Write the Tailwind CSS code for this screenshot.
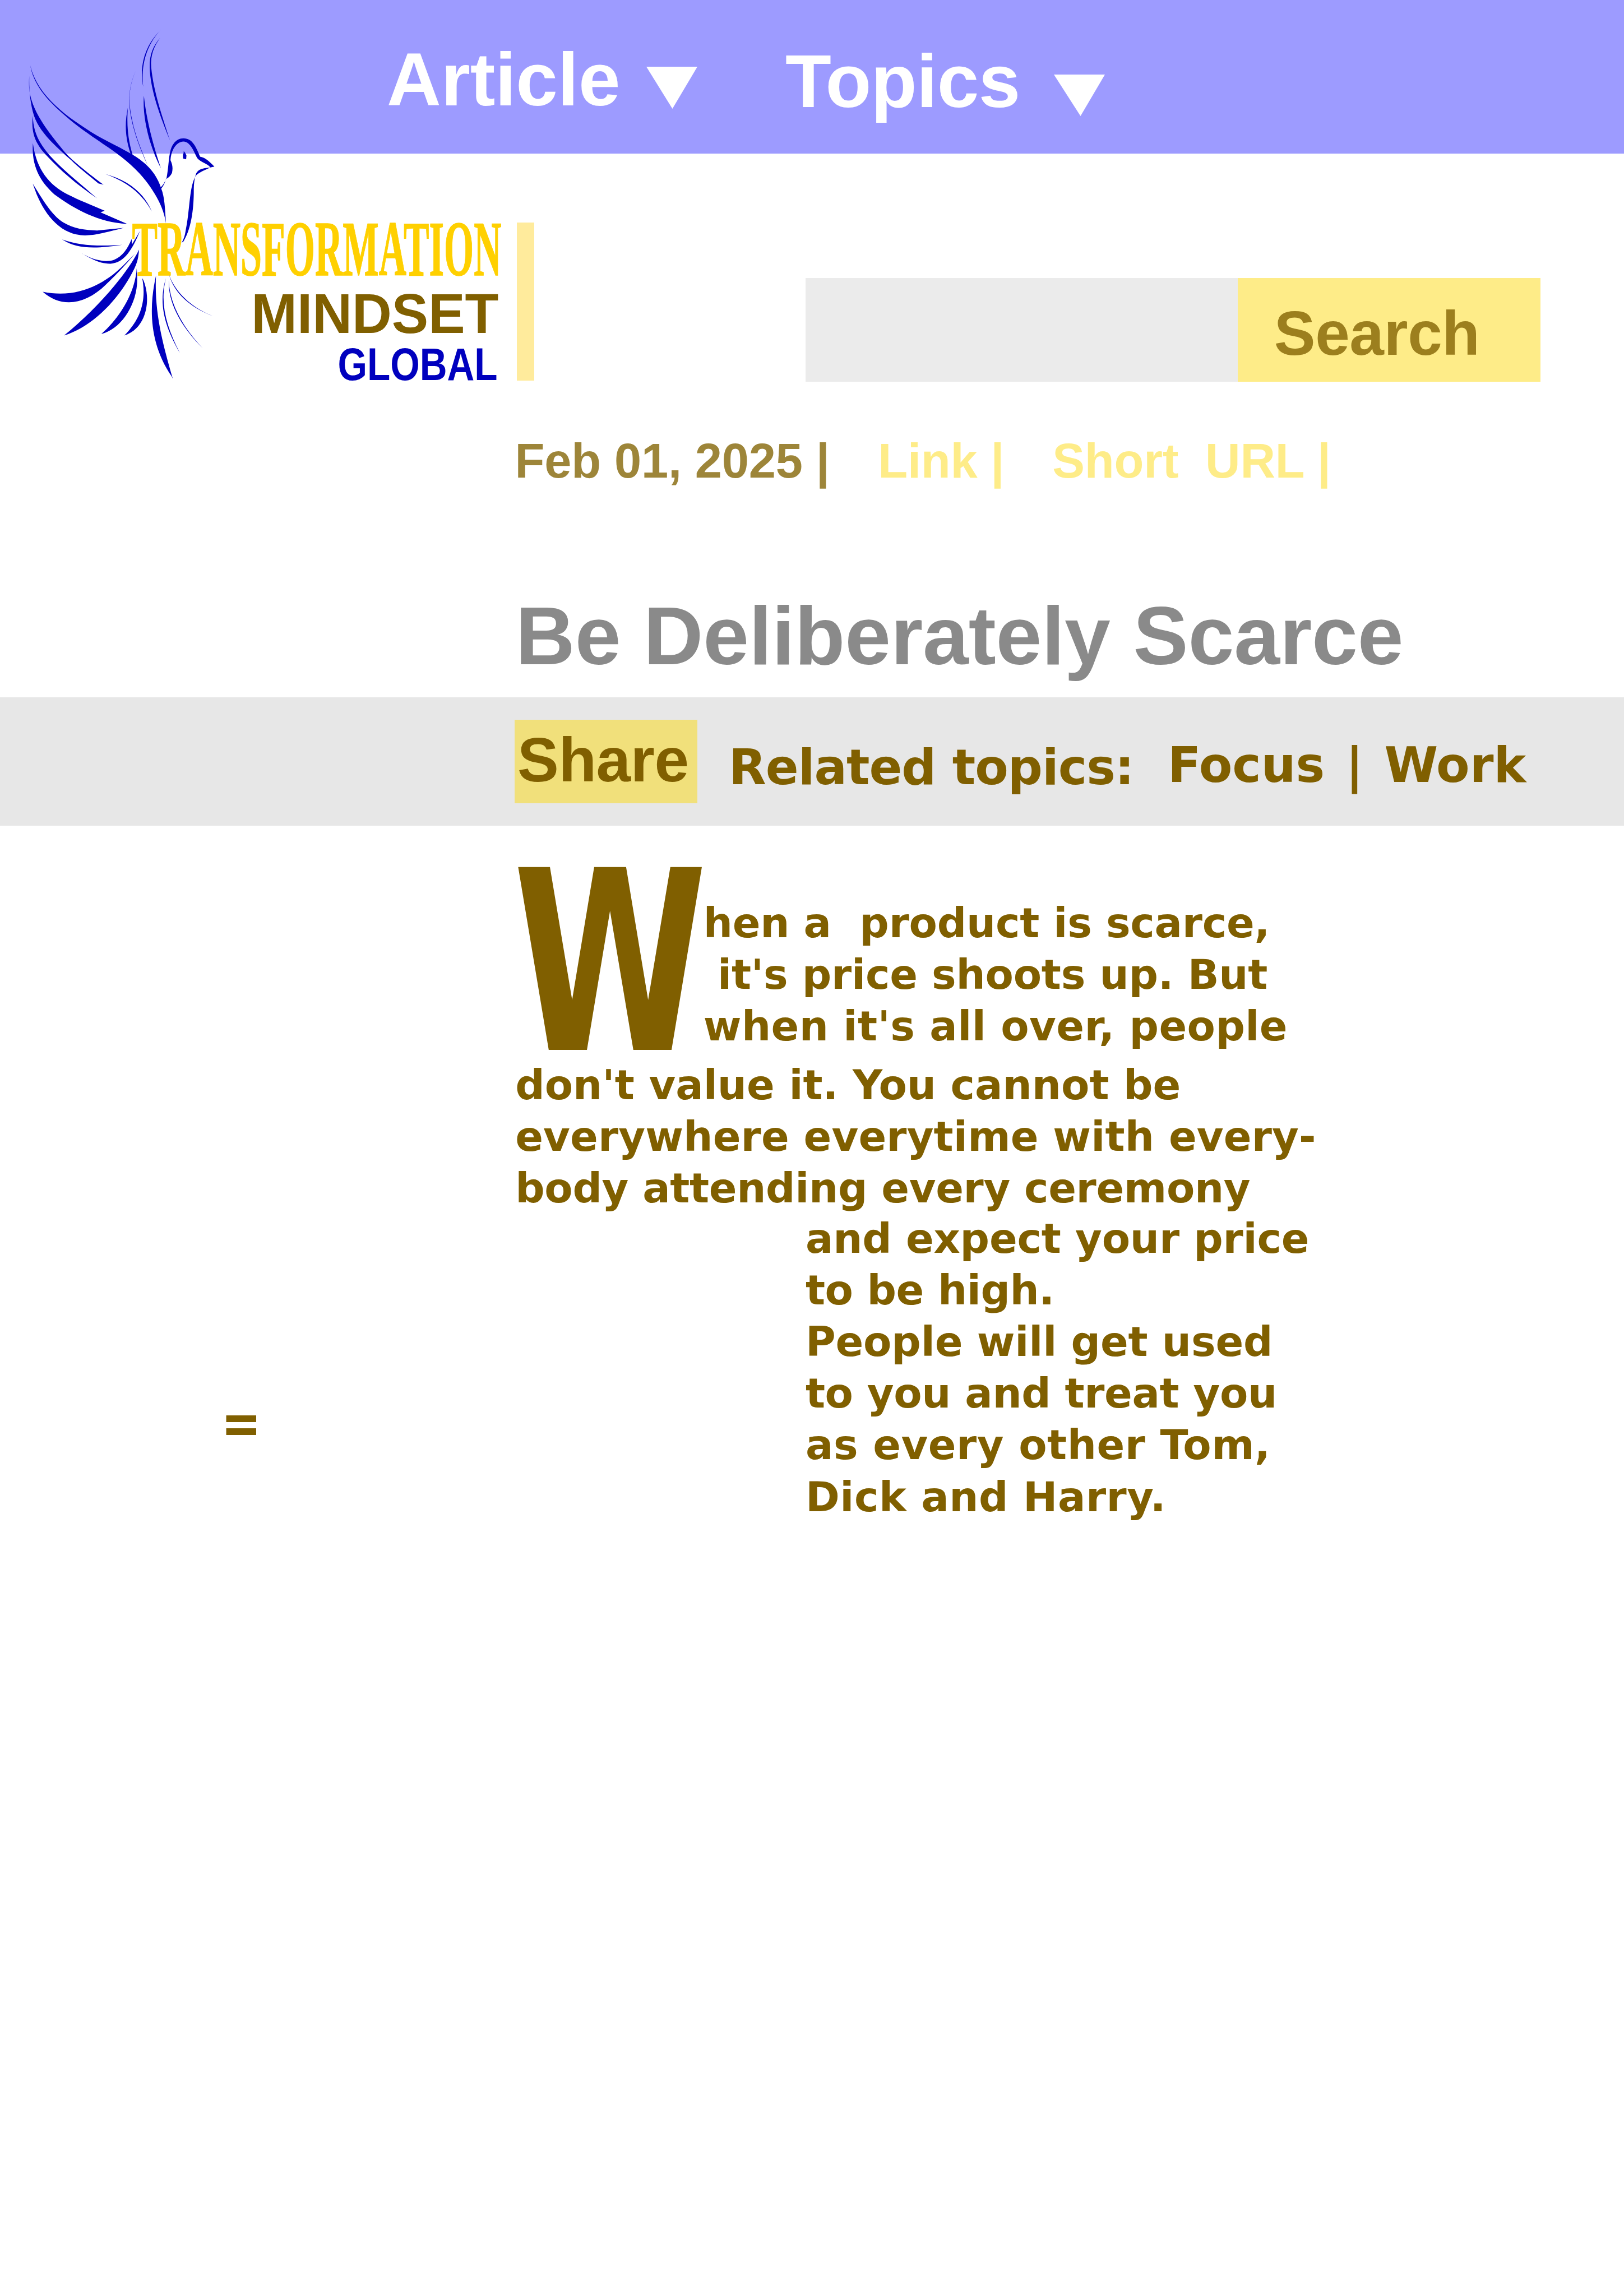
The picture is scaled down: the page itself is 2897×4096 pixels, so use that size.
<!DOCTYPE html>
<html lang="en">
<head>
<meta charset="utf-8">
<title>Be Deliberately Scarce</title>
<script src="https://cdn.jsdelivr.net/npm/@tailwindcss/browser@4"></script>
</head>
<body class="relative h-[4096px] w-[2897px] overflow-hidden bg-white font-['Liberation_Sans',Arial,sans-serif] font-bold text-[#805f00]">

<header class="flex h-[273.6px] items-start bg-[#9d9bff] pl-[690px] text-[134px] leading-[160px] text-white">
  <a class="mt-[62px] w-[418px] tracking-[-0.1px]">Article</a>
  <svg class="mt-[119.4px] ml-[45px] h-[75px] w-[91px]" viewBox="0 0 91 75" fill="currentColor"><path d="M0 0H91L46.5 75Z"/></svg>
  <a class="mt-[65.4px] ml-[157px] w-[421px] tracking-[-0.5px]">Topics</a>
  <svg class="mt-[133px] ml-[58px] h-[74px] w-[91px]" viewBox="0 0 91 74" fill="currentColor"><path d="M0 0H91L47.5 74Z"/></svg>
</header>

<!-- Dove and wordmark, overlapping the top bar -->
<svg class="absolute top-0 left-0 h-[702px] w-[966px]" viewBox="0 0 1060 770">
  <g fill="#0000be" transform="translate(40 40) scale(.33333)">
    <path d="M826 53C735 140 695 260 721 390C706 262 741 140 826 53Z"/>
    <path d="M821 102C780 148 757 200 759 275C763 410 820 560 879 706C835 570 782 420 768 275C762 205 785 150 821 102Z"/>
    <path d="M725 442C715 570 758 740 825 868C785 750 740 590 725 442Z"/>
    <path d="M678 294C630 400 635 490 655 580C675 680 710 760 748 852C705 760 670 670 650 570C632 480 633 390 678 294Z"/>
    <path d="M631 512C610 610 615 700 655 805L664 805C625 690 625 590 631 512Z"/>
    <path d="M58 264C100 450 290 575 420 658C510 712 580 742 630 772C740 830 800 900 826 985C848 1040 848 1100 855 1192C845 1125 820 1070 790 1020C720 900 620 815 500 735C410 672 330 620 270 565C150 465 75 370 58 264Z"/>
    <path d="M52 325C48 375 52 420 58 440C80 540 150 640 262 775C290 808 380 885 488 964L458 957C400 908 340 862 300 822C200 735 110 650 80 560C55 480 50 400 52 325Z"/>
    <path d="M73 560C75 745 220 845 450 1044C330 965 230 875 160 800C90 730 60 660 73 560Z"/>
    <path d="M73 720C95 880 170 965 275 1020C350 1058 410 1080 495 1117L470 1126L627 1195C460 1185 320 1110 198 1020C110 940 65 850 73 720Z"/>
    <path d="M72 958C130 1050 180 1140 250 1185C310 1222 380 1232 450 1233L607 1218C500 1245 440 1262 380 1262C240 1260 150 1150 95 1020Z"/>
    <path d="M497 901C620 935 720 1000 772 1122C710 1010 620 945 497 901Z"/>
    <path d="M822 982C845 960 850 940 857 930C870 870 870 800 882 760C895 715 925 692 957 692C1010 692 1030 740 1055 800C1090 808 1105 825 1139 858L1115 863C1100 840 1060 835 1038 808C1020 775 1000 711 957 711C920 711 885 755 881 820C895 850 895 870 890 895C875 925 860 925 853 935C848 955 840 972 826 988Z"/>
    <path d="M1115 863C1080 867 1040 870 1030 905L1025 920C1040 895 1060 890 1115 863Z"/>
    <path d="M1025 920C990 990 995 1120 970 1235C965 1270 955 1290 946 1306L958 1297C1010 1210 1018 1080 1018 1000C1018 960 1022 940 1025 920Z"/>
    <path d="M959 767L967 777L975 792L973 815L955 810L954 788L958 780Z"/>
  </g>
  <g fill="#0000be" transform="translate(40 380) scale(.33333)">
    <path d="M244 265C340 300 450 308 598 297C440 322 330 322 244 265Z"/>
    <path d="M357 346C440 395 510 400 550 385C600 365 630 320 653 263L655 295C670 270 685 245 702 216C660 320 610 405 530 408C460 410 400 370 357 346Z"/>
    <path d="M131 573C330 615 490 530 600 422L672 350L707 307C620 415 560 475 500 533C380 650 240 670 131 573Z"/>
    <path d="M697 325C620 480 430 690 256 830C420 780 580 620 670 435C690 390 692 370 697 325Z"/>
    <path d="M683 435C675 570 590 720 475 821C600 790 695 630 685 480Z"/>
    <path d="M715 492C740 620 710 730 610 830C740 790 770 620 722 505Z"/>
    <path d="M796 478C760 640 745 860 888 1070L896 1085L890 1068C840 890 785 700 796 478Z"/>
    <path d="M855 492C807 640 848 780 936 932C858 780 816 640 855 492Z"/>
    <path d="M871 505C866 640 945 780 1071 905C948 775 876 640 871 505Z"/>
  </g>
  <text x="258.5" y="539" font-size="153.7" textLength="723" lengthAdjust="spacingAndGlyphs" fill="#ffd000" stroke="#ffd000" stroke-width="1.6" class="font-['Liberation_Serif','Times_New_Roman',serif]">TRANSFORMATION</text>
  <path fill="#0000be" transform="translate(40 380) scale(.33333)" d="M872 470C905 570 1000 665 1132 716C988 662 900 575 872 470Z"/>
  <text x="492" y="651.7" font-size="110.5" textLength="484" lengthAdjust="spacingAndGlyphs" fill="#805f00">MINDSET</text>
  <text x="661" y="743.7" font-size="89.2" textLength="313" lengthAdjust="spacingAndGlyphs" fill="#0000be">GLOBAL</text>
</svg>

<div class="flex h-[407.8px] items-start pl-[922.3px]">
  <div class="mt-[123.5px] h-[281.6px] w-[30.4px] bg-[#ffeb9c]"></div>
  <form class="mt-[222.4px] ml-[484.4px] flex h-[185.4px]">
    <div class="w-[770.7px] bg-[#ebebeb]"></div>
    <div class="w-[540.2px] bg-[#feec88] pt-[6px] pl-[65px] text-[110.7px] leading-[185.4px] tracking-[-0.4px] text-[#9c7f1e]">Search</div>
  </form>
</div>

<div class="mt-[90.4px] flex pl-[918.5px] text-[86.6px] leading-[100px] whitespace-pre text-[#feec88]">
  <span class="w-[562.8px] tracking-[-0.15px] text-[#9d8539]">Feb 01, 2025 |</span>
  <span class="ml-[85px] w-[226px] tracking-[-0.2px]">Link |</span>
  <span class="ml-[85px] tracking-[-0.2px]">Short  URL |</span>
</div>

<h1 class="mt-[182.2px] pl-[919.5px] text-[147.2px] leading-[160px] tracking-[-0.15px] text-[#8a8a8a]">Be Deliberately Scarce</h1>

<div class="mt-[30px] flex h-[229.4px] items-start bg-[#e7e7e7] pl-[918.2px] font-['DejaVu_Sans',Verdana,sans-serif] text-[86.8px] leading-[100px] whitespace-nowrap">
  <div class="mt-[40px] h-[149.5px] w-[325.8px] bg-[#f1e07b] pl-[4.8px] font-['Liberation_Sans',Arial,sans-serif] text-[110.7px] leading-[143.5px] tracking-[-0.4px]">Share</div>
  <span class="mt-[74.7px] ml-[56px] w-[722.6px] tracking-[-1px]">Related topics:</span>
  <span class="mt-[71.5px] ml-[60.4px]">Focus <span class="mx-[7px]">|</span> Work</span>
</div>

<main class="font-['DejaVu_Sans',Verdana,sans-serif] text-[73.36px] leading-[92.2px] whitespace-nowrap">
  <div class="flex h-[416.2px] items-start pl-[914.5px]">
    <div class="w-[340.3px] pt-[21.5px]"><div class="w-[494px] origin-left scale-x-[0.7026] text-[447.5px]/[447px]">W</div></div>
    <div class="pt-[127.5px]">
      <p class="tracking-[-0.25px]">hen a&nbsp; product is scarce,</p>
      <p class="tracking-[-0.23px]">&nbsp;it's price shoots up. But</p>
      <p class="tracking-[0.41px]">when it's all over, people</p>
    </div>
  </div>
  <div class="pl-[919.2px]">
    <p>don't value it. You cannot be</p>
    <p class="tracking-[0.16px]">everywhere everytime with every-</p>
    <p class="tracking-[-0.35px]">body attending every ceremony</p>
  </div>
  <div class="-mt-[2.5px] flex items-start pl-[394.5px]">
    <div class="mt-[321px] w-[1042.4px] scale-y-[1.2] text-[85.4px]/[110px]">=</div>
    <div>
      <p class="tracking-[-0.19px]">and expect your price</p>
      <p class="tracking-[-0.46px]">to be high.</p>
      <p class="tracking-[-0.16px]">People will get used</p>
      <p class="tracking-[-0.37px]">to you and treat you</p>
      <p class="tracking-[0.52px]">as every other Tom,</p>
      <p class="tracking-[0.5px]">Dick and Harry.</p>
    </div>
  </div>
</main>
</body>
</html>
